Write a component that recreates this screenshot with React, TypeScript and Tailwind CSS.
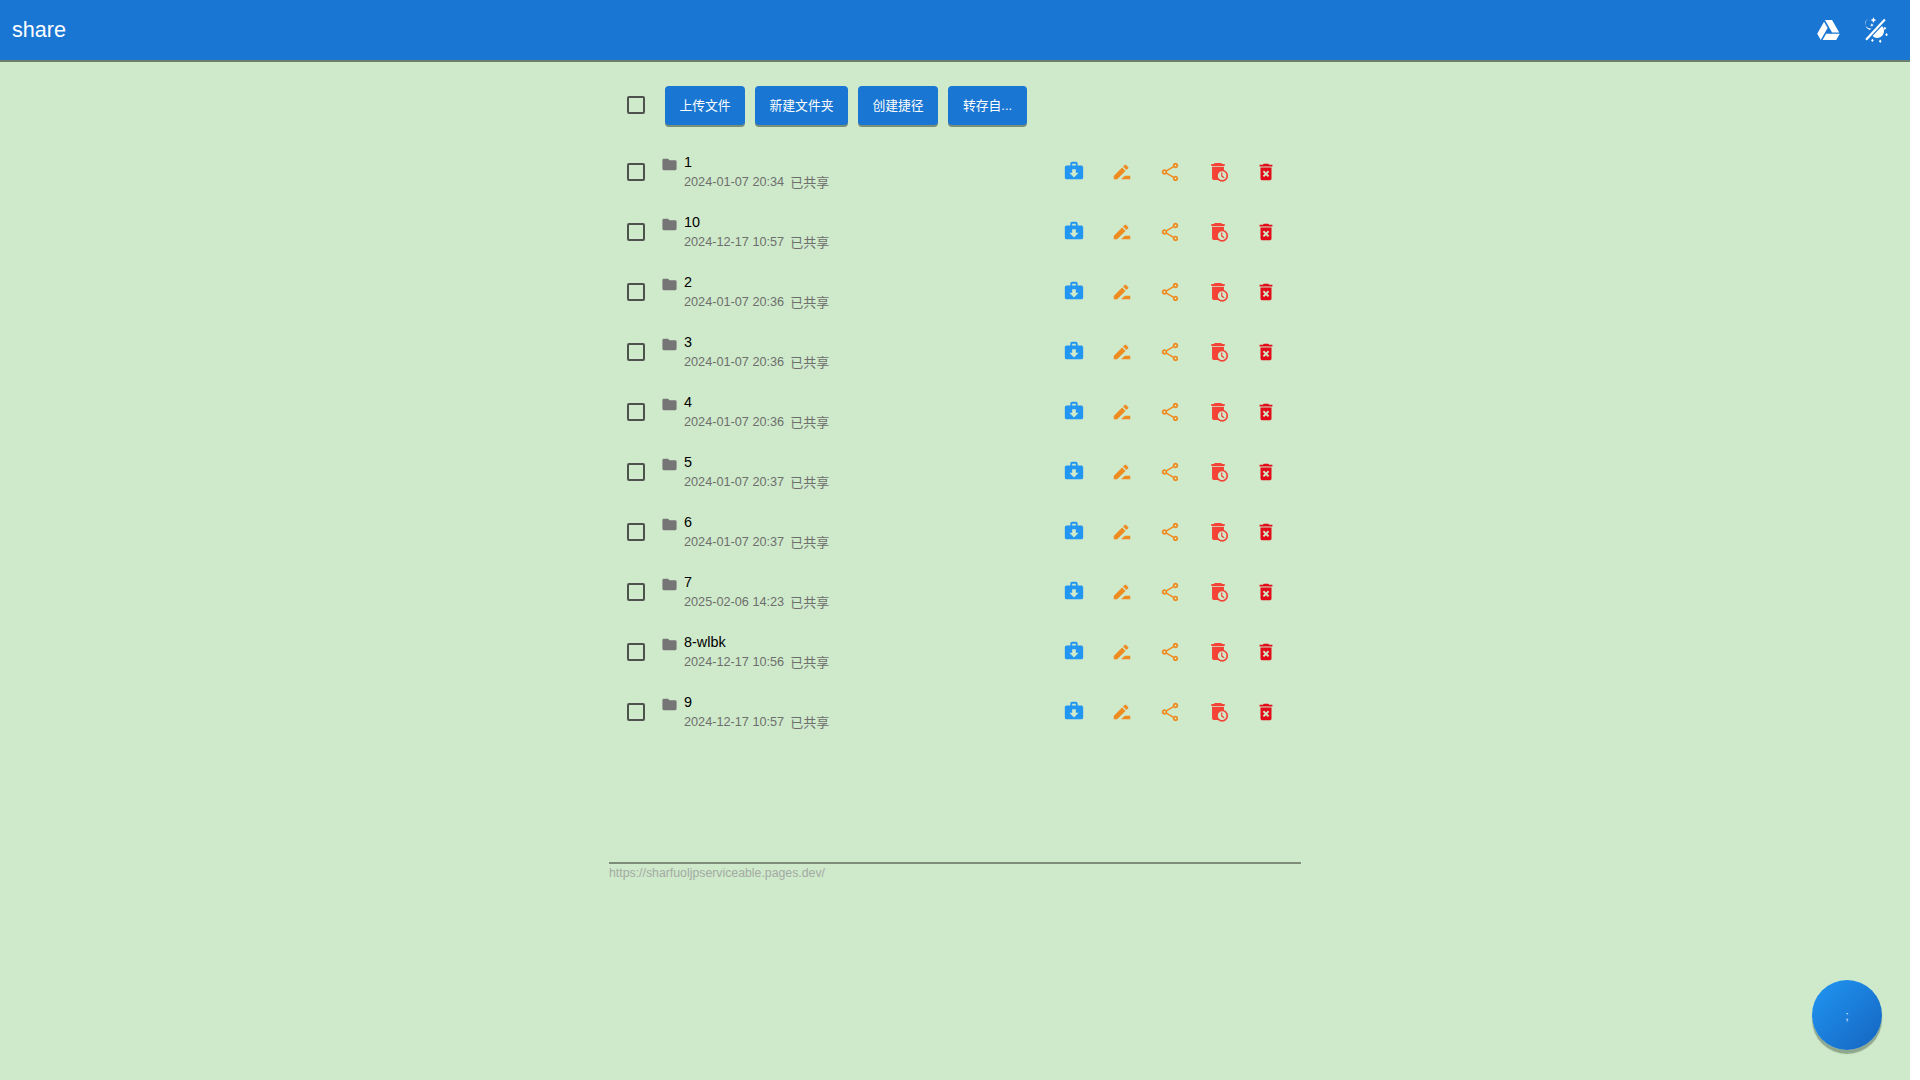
const Icon = ({ d, className }: { d: string; className: string }) => (
  <svg viewBox="0 0 24 24" fill="currentColor" className={className}><path d={d} /></svg>
);

const P = {
  folder: "M10 4H4c-1.1 0-1.99.9-1.99 2L2 18c0 1.1.9 2 2 2h16c1.1 0 2-.9 2-2V8c0-1.1-.9-2-2-2h-8l-2-2z",
  box: "M10,2H14A2,2 0 0,1 16,4V6H20A2,2 0 0,1 22,8V19A2,2 0 0,1 20,21H4C2.89,21 2,20.1 2,19V8C2,6.89 2.89,6 4,6H8V4C8,2.89 8.89,2 10,2M14,6V4H10V6H14M12,19L17,14H14V10H10V14H7L12,19Z",
  pen: "M15 16l-4 4h10v-4zM12.06 7.19 3 16.25V20h3.75l9.06-9.06zM18.71 8.04c.39-.39.39-1.02 0-1.41l-2.34-2.34a.996.996 0 0 0-1.41 0l-1.83 1.83 3.75 3.75z",
  share: "M18 16.08C17.24 16.08 16.56 16.38 16.04 16.85L8.91 12.7C8.96 12.47 9 12.24 9 12S8.96 11.53 8.91 11.3L15.96 7.19C16.5 7.69 17.21 8 18 8C19.66 8 21 6.66 21 5S19.66 2 18 2 15 3.34 15 5C15 5.24 15.04 5.47 15.09 5.7L8.04 9.81C7.5 9.31 6.79 9 6 9C4.34 9 3 10.34 3 12S4.34 15 6 15C6.79 15 7.5 14.69 8.04 14.19L15.16 18.34C15.11 18.55 15.08 18.77 15.08 19C15.08 20.61 16.39 21.91 18 21.91S20.92 20.61 20.92 19C20.92 17.39 19.61 16.08 18 16.08M18 4C18.55 4 19 4.45 19 5S18.55 6 18 6 17 5.55 17 5 17.45 4 18 4M6 13C5.45 13 5 12.55 5 12S5.45 11 6 11 7 11.45 7 12 6.55 13 6 13M18 20C17.45 20 17 19.55 17 19S17.45 18 18 18 19 18.45 19 19 18.55 20 18 20Z",
  forever: "M6 19c0 1.1.9 2 2 2h8c1.1 0 2-.9 2-2V7H6v12zm2.46-7.12 1.41-1.41L12 12.59l2.12-2.12 1.41 1.41L13.41 14l2.12 2.12-1.41 1.41L12 15.41l-2.12 2.12-1.41-1.41L10.59 14l-2.13-2.12zM15.5 4l-1-1h-5l-1 1H5v2h14V4z",
  drive: "M7.71,3.5L1.15,15L4.58,21L11.13,9.5M9.73,15L6.3,21H19.42L22.85,15M22.28,14L15.42,2H8.58L8.57,2L15.43,14H22.28Z",
};

const rows = [
  ["1", "2024-01-07 20:34"],
  ["10", "2024-12-17 10:57"],
  ["2", "2024-01-07 20:36"],
  ["3", "2024-01-07 20:36"],
  ["4", "2024-01-07 20:36"],
  ["5", "2024-01-07 20:37"],
  ["6", "2024-01-07 20:37"],
  ["7", "2025-02-06 14:23"],
  ["8-wlbk", "2024-12-17 10:56"],
  ["9", "2024-12-17 10:57"],
];

const Check = () => (
  <span className="w-[18px] h-[18px] rounded-[2px] border-2 border-[#4d524d] shrink-0" />
);

const DeleteClock = () => (
  <svg viewBox="0 0 24 24" className="w-[22px] h-[22px] text-[#f44336]" fill="currentColor">
    <path d="M8.500 2.200 7.500 3.400H4.700v2h14.600v-2h-2.800l-1-1.200zM5.500 6.400h13v14.300h-11a2 2 0 0 1-2-2z" />
    <circle cx="16.500" cy="16" r="5.600" fill="#cfe9cb" stroke="currentColor" strokeWidth="1.800" />
    <path d="M16.100 12.600v3.900l2.700 1.700" fill="none" stroke="currentColor" strokeWidth="1.300" />
  </svg>
);

const Btn = ({ children, w }: { children: string; w: string }) => (
  <button className={`${w} h-[39px] rounded-[4px] bg-[#1976d2] text-white text-[12.8px] shadow-[0_2px_0_#7a8f7a] flex items-center justify-center`}>{children}</button>
);

const Cell = ({ children }: { children: React.ReactNode }) => (
  <span className="w-[48px] flex items-center justify-center">{children}</span>
);

export default function App() {
  return (
    <div className="w-[1910px] h-[1080px] bg-[#cfe9cb] relative overflow-hidden" style={{ fontFamily: '"Liberation Sans","Noto Sans CJK SC",sans-serif' }}>
      <header className="h-[62px] bg-[#1976d2] border-b-2 border-[#6b7f6b] flex items-center justify-between pl-[12px] pr-[11px] text-white">
        <span className="text-[21.6px]">share</span>
        <div className="flex items-center">
          <Cell><Icon d={P.drive} className="w-[25px] h-[25px] ml-[2px]" /></Cell>
          <Cell>
            <svg viewBox="0 0 25 25" className="w-[26px] h-[26px]" fill="currentColor">
              <path d="M6.500 1.500A6 6 0 0 0 7.500 12.500L9.200 10.800A4.200 4.200 0 0 1 6.500 1.500Z" />
              <path d="M11 .2 11.900 2.100 13.800 3 11.900 3.900 11 5.800 10.100 3.900 8.200 3 10.100 2.100Z" />
              <path d="M9.500 6 10.100 7.100 11.200 7.700 10.100 8.300 9.500 9.400 8.900 8.300 7.800 7.700 8.900 7.100Z" />
              <path d="M22 2.500 3.900 21.800" fill="none" stroke="currentColor" strokeWidth="2.100" />
              <path d="M19.200 8.700A6.500 6.500 0 0 1 10.200 18.300Z" />
              <path d="M22 9.300 23.300 10.900 22 12.500 20.700 10.900ZM23.600 15.400 24.900 17 23.600 18.600 22.300 17ZM17.500 21.700 18.800 23.300 17.500 24.900 16.200 23.300ZM10 20.900 11.300 22.500 10 24.100 8.700 22.500Z" />
            </svg>
          </Cell>
        </div>
      </header>

      <main className="w-[692px] mx-auto">
        <div className="flex items-center h-[39px] mt-[24px]">
          <span className="ml-[18px] mb-[1px] flex"><Check /></span>
          <div className="flex gap-[10px] ml-[20px]">
            <Btn w="w-[80px]">上传文件</Btn>
            <Btn w="w-[93px]">新建文件夹</Btn>
            <Btn w="w-[80px]">创建捷径</Btn>
            <Btn w="w-[79px]">转存自...</Btn>
          </div>
        </div>
        <ul className="mt-[17px]">
          {rows.map(([name, date]) => (
            <li key={name} className="h-[60px] flex items-center">
              <span className="ml-[18px] flex"><Check /></span>
              <Icon d={P.folder} className="w-[17px] h-[17px] text-[#757575] ml-[16px] mb-[16px] shrink-0" />
              <div className="ml-[6px] flex-1">
                <div className="text-[14.4px] leading-[18px] text-black">{name}</div>
                <div className="text-[12.7px] leading-[18px] text-[#6d6f6c] mt-[2px] flex gap-[6px]">
                  <span>{date}</span><span className="mt-[1px] text-[13px]">已共享</span>
                </div>
              </div>
              <div className="flex items-center mr-[11px]">
                <Cell><Icon d={P.box} className="w-[22px] h-[22px] text-[#2196f3] mb-[2px]" /></Cell>
                <Cell><Icon d={P.pen} className="w-[22px] h-[22px] text-[#ee8c22]" /></Cell>
                <Cell><Icon d={P.share} className="w-[22px] h-[22px] text-[#ee8c22]" /></Cell>
                <Cell><DeleteClock /></Cell>
                <Cell><Icon d={P.forever} className="w-[22px] h-[22px] text-[#e30b17]" /></Cell>
              </div>
            </li>
          ))}
        </ul>
        <footer className="mt-[120px] border-t-2 border-[#7d8d7a] text-[12.3px] leading-[18px] text-[#a3aba3]">
          https://sharfuoljpserviceable.pages.dev/
        </footer>
      </main>

      <button className="absolute right-[28px] bottom-[30px] w-[70px] h-[70px] rounded-full bg-gradient-to-br from-[#2196f3] to-[#1565c0] shadow-[0_4px_1px_#8fa78c] text-white/80 text-[13px] pt-[2px] flex items-center justify-center">;</button>
    </div>
  );
}
